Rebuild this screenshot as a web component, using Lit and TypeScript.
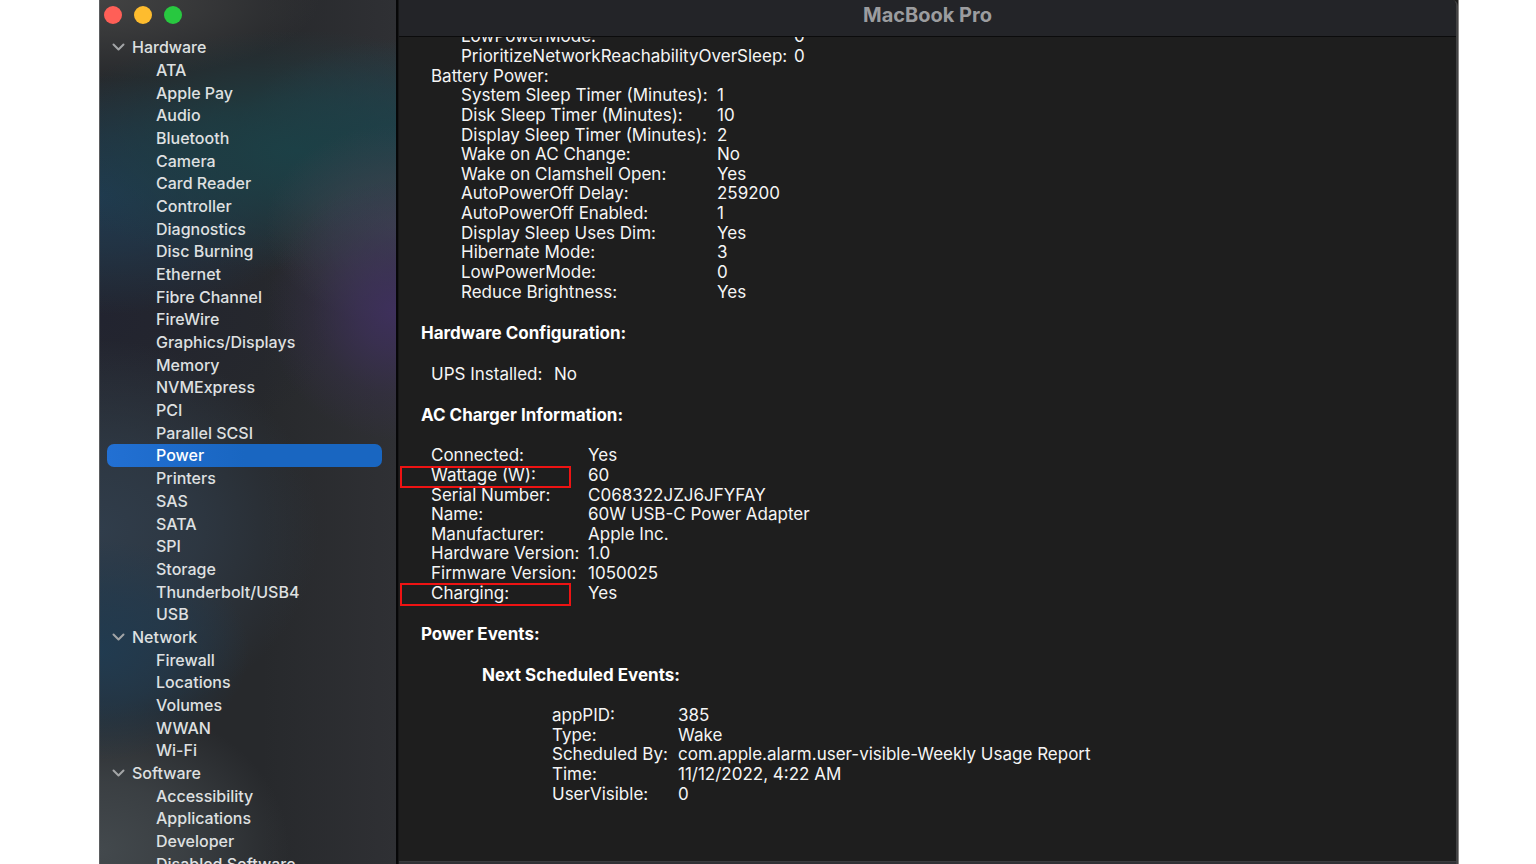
import { LitElement, html, css } from "lit";
import { customElement, property, state } from "lit/decorators.js";

interface Group {
  name: string;
  items: string[];
}

interface Row {
  label: string;
  value: string;
  marked?: boolean;
}

const GROUPS: Group[] = [
  {
    name: "Hardware",
    items: [
      "ATA", "Apple Pay", "Audio", "Bluetooth", "Camera", "Card Reader",
      "Controller", "Diagnostics", "Disc Burning", "Ethernet",
      "Fibre Channel", "FireWire", "Graphics/Displays", "Memory",
      "NVMExpress", "PCI", "Parallel SCSI", "Power", "Printers", "SAS",
      "SATA", "SPI", "Storage", "Thunderbolt/USB4", "USB",
    ],
  },
  { name: "Network", items: ["Firewall", "Locations", "Volumes", "WWAN", "Wi-Fi"] },
  {
    name: "Software",
    items: ["Accessibility", "Applications", "Developer", "Disabled Software"],
  },
];

const AC_POWER: Row[] = [
  { label: "LowPowerMode:", value: "0" },
  { label: "PrioritizeNetworkReachabilityOverSleep:", value: "0" },
];

const BATTERY_POWER: Row[] = [
  { label: "System Sleep Timer (Minutes):", value: "1" },
  { label: "Disk Sleep Timer (Minutes):", value: "10" },
  { label: "Display Sleep Timer (Minutes):", value: "2" },
  { label: "Wake on AC Change:", value: "No" },
  { label: "Wake on Clamshell Open:", value: "Yes" },
  { label: "AutoPowerOff Delay:", value: "259200" },
  { label: "AutoPowerOff Enabled:", value: "1" },
  { label: "Display Sleep Uses Dim:", value: "Yes" },
  { label: "Hibernate Mode:", value: "3" },
  { label: "LowPowerMode:", value: "0" },
  { label: "Reduce Brightness:", value: "Yes" },
];

const UPS: Row[] = [{ label: "UPS Installed:", value: "No" }];

const CHARGER: Row[] = [
  { label: "Connected:", value: "Yes" },
  { label: "Wattage (W):", value: "60", marked: true },
  { label: "Serial Number:", value: "C068322JZJ6JFYFAY" },
  { label: "Name:", value: "60W USB-C Power Adapter" },
  { label: "Manufacturer:", value: "Apple Inc." },
  { label: "Hardware Version:", value: "1.0" },
  { label: "Firmware Version:", value: "1050025" },
  { label: "Charging:", value: "Yes", marked: true },
];

const EVENTS: Row[] = [
  { label: "appPID:", value: "385" },
  { label: "Type:", value: "Wake" },
  { label: "Scheduled By:", value: "com.apple.alarm.user-visible-Weekly Usage Report" },
  { label: "Time:", value: "11/12/2022, 4:22 AM" },
  { label: "UserVisible:", value: "0" },
];

@customElement("category-tree")
class CategoryTree extends LitElement {
  @state() private selected = "Power";
  @state() private closed: string[] = [];

  static styles = css`
    :host {
      display: flex;
      flex-direction: column;
      min-height: 0;
      overflow: hidden;
      border-right: 2px solid #070708;
      box-shadow: inset 1px 0 #5b5d60;
      font-size: 16px;
      font-weight: 500;
      background:
        radial-gradient(ellipse 130px 130px at 100% 310px, #3e305c, #3e305cb0 30%, #3e305c40 65%, #3e305c00),
        radial-gradient(ellipse 130px 100px at 100% 225px, #3e434fd0, #3e434f80 50%, #3e434f00),
        radial-gradient(ellipse 260px 120px at 66% 150px, #1c4046, #1c4046b0 40%, #1c404640 75%, #1c404600),
        radial-gradient(ellipse 160px 100px at 100% 140px, #234453d0, #23445370 50%, #23445300),
        radial-gradient(ellipse 230px 120px at 0% 195px, #203a50, #203a50a0 45%, #203a5000),
        radial-gradient(ellipse 220px 80px at 0% 0, #434343, #43434390 45%, #43434300),
        radial-gradient(ellipse 150px 110px at 0% 650px, #213b50, #213b50a0 50%, #213b5000),
        radial-gradient(ellipse 220px 190px at 0% 530px, #303d4b, #303d4bb0 45%, #303d4b00),
        radial-gradient(ellipse 190px 150px at 0% 850px, #43494d, #43494db0 45%, #43494d00),
        radial-gradient(ellipse 240px 140px at 0% 320px, #222430, #22243000),
        linear-gradient(90deg, #27292c 55%, #2f3034);
    }
    .lights {
      display: flex;
      gap: 12px;
      padding: 6px 5px 12px;
    }
    .light {
      width: 18px;
      height: 18px;
      padding: 0;
      border: 0;
      border-radius: 50%;
    }
    .close { background: #ff5f57; }
    .minimize { background: #febc2e; }
    .zoom { background: #28c840; }
    .tree {
      flex: 1;
      display: grid;
      grid-auto-rows: 1fr;
      margin: 0 14px -11px 8px;
    }
    .group {
      display: contents;
    }
    .heading,
    .item {
      display: flex;
      align-items: center;
      min-height: 0;
      color: #dfe0e1;
      font: inherit;
      line-height: 20px;
      white-space: nowrap;
    }
    .heading {
      gap: 7px;
      padding: 0 5px;
      border: 0;
      background: none;
      text-align: left;
    }
    .chevron {
      width: 13px;
      height: 8px;
      fill: none;
      stroke: #a3a5a7;
      stroke-width: 2;
      stroke-linecap: round;
      stroke-linejoin: round;
    }
    .item {
      padding-left: 49px;
      border-radius: 7px;
      text-decoration: none;
    }
    .selected {
      background: linear-gradient(90deg, #2270d3, #1966c1 50%);
      color: #fff;
    }
  `;

  private toggle(name: string) {
    this.closed = this.closed.includes(name)
      ? this.closed.filter((n) => n !== name)
      : [...this.closed, name];
  }

  private pick(e: Event, item: string) {
    e.preventDefault();
    this.selected = item;
  }

  render() {
    return html`
      <div class="lights">
        <button class="light close" aria-label="Close"></button>
        <button class="light minimize" aria-label="Minimize"></button>
        <button class="light zoom" aria-label="Zoom"></button>
      </div>
      <nav class="tree" aria-label="Categories">
        ${GROUPS.map((g) => {
          const open = !this.closed.includes(g.name);
          return html`
            <div class="group">
              <button class="heading" aria-expanded=${open} @click=${() => this.toggle(g.name)}>
                <svg class="chevron" viewBox="0 0 13 8" aria-hidden="true">
                  <path d="M1.5 1.5 L6.5 6.5 L11.5 1.5" />
                </svg>
                ${g.name}
              </button>
              ${open
                ? g.items.map(
                    (i) => html`<a
                      class="item ${i === this.selected ? "selected" : ""}"
                      href="#"
                      @click=${(e: Event) => this.pick(e, i)}
                      >${i}</a
                    >`
                  )
                : null}
            </div>
          `;
        })}
      </nav>
    `;
  }
}

@customElement("report-table")
class ReportTable extends LitElement {
  @property({ attribute: false }) rows: Row[] = [];

  static styles = css`
    :host {
      display: block;
    }
    .table {
      width: 100%;
      height: 100%;
      border-collapse: collapse;
      table-layout: fixed;
    }
    .label,
    .value {
      padding: 0;
      font-weight: inherit;
      line-height: 19px;
      text-align: left;
      white-space: nowrap;
    }
    .label {
      position: relative;
      width: var(--label-width);
    }
    .marked::after {
      content: "";
      position: absolute;
      inset: 0 17px -3px -31px;
      border: 2px solid #ee1313;
    }
  `;

  render() {
    return html`
      <table class="table">
        <tbody>
          ${this.rows.map(
            (r) => html`<tr>
              <th scope="row" class="label ${r.marked ? "marked" : ""}">${r.label}</th>
              <td class="value">${r.value}</td>
            </tr>`
          )}
        </tbody>
      </table>
    `;
  }
}

@customElement("app-root")
class AppRoot extends LitElement {
  static styles = css`
    :host {
      display: block;
      height: 100vh;
      overflow: hidden;
      background: #fff;
      font-family: Inter, "Liberation Sans", sans-serif;
      font-size: 17px;
    }
    .window {
      box-sizing: border-box;
      display: grid;
      grid-template-columns: 299px minmax(0, 1fr);
      height: 100%;
      margin: 0 77px 0 99px;
      border-right: 1px solid #8a8887;
      background: #1e1e1e;
    }
    .main {
      display: flex;
      flex-direction: column;
      min-width: 0;
      min-height: 0;
      border-left: 1px solid #161617;
      border-right: 2px solid #434344;
      border-top-right-radius: 6px;
      background: #1e1e1e;
      overflow: hidden;
    }
    .titlebar {
      flex: none;
      height: 36px;
      border-bottom: 1px solid #0b0b0c;
      background: #232428;
      color: #9b9c9f;
      font-size: 20px;
      font-weight: 700;
      line-height: 30px;
      text-align: center;
      margin: 0;
    }
    .pane {
      flex: 1;
      min-height: 0;
      overflow: hidden;
      color: #f5f5f5;
      line-height: 20px;
    }
    .report {
      margin-top: -10px;
      padding-left: 22px;
    }
    .title {
      margin: 21px 0;
      color: #fff;
      font-size: 17px;
      font-weight: 700;
      line-height: 20px;
    }
    .sub {
      margin-left: 61px;
    }
    .name {
      margin: 0 0 0 10px;
    }
    .ac { height: 39px; margin-left: 40px; --label-width: 333px; }
    .battery { height: 216px; margin-left: 40px; --label-width: 256px; }
    .ups { height: 20px; margin-left: 10px; --label-width: 123px; }
    .charger { height: 157px; margin-left: 10px; --label-width: 157px; }
    .events { height: 98px; margin-left: 131px; --label-width: 126px; }
    .foot {
      flex: none;
      height: 2px;
      border-top: 1px solid #3a3b3e;
      background: #303135;
    }
  `;

  render() {
    return html`
      <div class="window">
        <category-tree></category-tree>
        <main class="main">
          <h1 class="titlebar">MacBook Pro</h1>
          <div class="pane">
            <div class="report">
              <report-table class="ac" .rows=${AC_POWER}></report-table>
              <p class="name">Battery Power:</p>
              <report-table class="battery" .rows=${BATTERY_POWER}></report-table>
              <h2 class="title">Hardware Configuration:</h2>
              <report-table class="ups" .rows=${UPS}></report-table>
              <h2 class="title">AC Charger Information:</h2>
              <report-table class="charger" .rows=${CHARGER}></report-table>
              <h2 class="title">Power Events:</h2>
              <h3 class="title sub">Next Scheduled Events:</h3>
              <report-table class="events" .rows=${EVENTS}></report-table>
            </div>
          </div>
          <div class="foot"></div>
        </main>
      </div>
    `;
  }
}
